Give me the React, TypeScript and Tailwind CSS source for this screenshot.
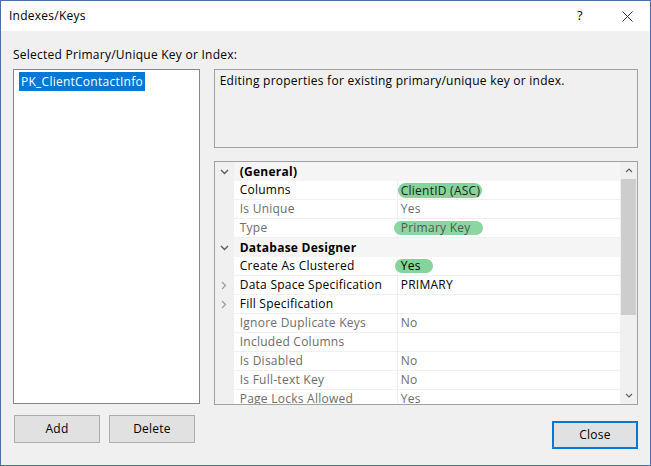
import React from "react";

type Row =
  | { kind: "cat"; name: string }
  | { kind: "prop"; name: string; value?: string; dim?: boolean; mark?: "clientid" | "pk" | "yes"; expand?: boolean };

const rows: Row[] = [
  { kind: "cat", name: "(General)" },
  { kind: "prop", name: "Columns", value: "ClientID (ASC)", mark: "clientid" },
  { kind: "prop", name: "Is Unique", value: "Yes", dim: true },
  { kind: "prop", name: "Type", value: "Primary Key", dim: true, mark: "pk" },
  { kind: "cat", name: "Database Designer" },
  { kind: "prop", name: "Create As Clustered", value: "Yes", mark: "yes" },
  { kind: "prop", name: "Data Space Specification", value: "PRIMARY", expand: true },
  { kind: "prop", name: "Fill Specification", value: "", expand: true },
  { kind: "prop", name: "Ignore Duplicate Keys", value: "No", dim: true },
  { kind: "prop", name: "Included Columns", value: "", dim: true },
  { kind: "prop", name: "Is Disabled", value: "No", dim: true },
  { kind: "prop", name: "Is Full-text Key", value: "No", dim: true },
  { kind: "prop", name: "Page Locks Allowed", value: "Yes", dim: true },
];

function ChevronDown() {
  return (
    <svg width="9" height="6" viewBox="0 0 9 6" fill="none">
      <path d="M1 1l3.5 3.5L8 1" stroke="#5a5a5a" strokeWidth="1.4" />
    </svg>
  );
}

function ChevronRight() {
  return (
    <svg width="6" height="9" viewBox="0 0 6 9" fill="none">
      <path d="M1 1l3.5 3.5L1 8" stroke="#9a9a9a" strokeWidth="1.2" />
    </svg>
  );
}

function Value({ row }: { row: Extract<Row, { kind: "prop" }> }) {
  const color = row.dim ? "text-[#6d6d6d]" : "text-black";
  if (row.mark === "clientid") {
    return (
      <span className="inline-block -ml-[3px] rounded-full bg-[#86d39c] pl-[3px] pr-[2px] leading-[15px] text-[#1e1e1e]">
        {row.value}
      </span>
    );
  }
  if (row.mark === "pk") {
    return (
      <span className="inline-block -ml-[7px] rounded-full bg-[#8ad7a2] pl-[7px] pr-[12px] leading-[14px] text-[#555]">
        {row.value}
      </span>
    );
  }
  if (row.mark === "yes") {
    return (
      <span className="inline-block -ml-[6px] rounded-full bg-[#86d39c] pl-[6px] pr-[12px] leading-[14px] text-black">
        {row.value}
      </span>
    );
  }
  return <span className={color}>{row.value}</span>;
}

function PropertyGrid() {
  return (
    <div className="flex h-[244px] border border-[#a0a0a0] bg-white">
      <div className="flex-1 overflow-hidden">
        {rows.map((row, i) =>
          row.kind === "cat" ? (
            <div key={i} className="grid h-[19px] grid-cols-[19px_1fr] bg-[#f5f5f5]">
              <div className="flex items-center justify-center bg-[#f0f0f0] pl-[1px]">
                <ChevronDown />
              </div>
              <div className="flex items-center pl-[6px] font-bold text-black">{row.name}</div>
            </div>
          ) : (
            <div key={i} className="grid h-[19px] grid-cols-[19px_163px_1fr]">
              <div className="flex items-center justify-center bg-[#f0f0f0]">
                {row.expand && <ChevronRight />}
              </div>
              <div
                className={`flex items-center border-b border-[#f0f0f0] pl-[6px] ${
                  row.dim ? "text-[#6d6d6d]" : "text-black"
                }`}
              >
                {row.name}
              </div>
              <div className="flex items-center border-b border-l border-[#f0f0f0] pl-[3px]">
                <Value row={row} />
              </div>
            </div>
          )
        )}
      </div>
      <div className="flex w-[17px] flex-col bg-[#f0f0f0]">
        <div className="flex h-[17px] items-center justify-center">
          <svg width="8" height="5" viewBox="0 0 8 5" fill="none">
            <path d="M1 4l3-3 3 3" stroke="#606060" strokeWidth="1.2" />
          </svg>
        </div>
        <div className="flex-1 px-[1px]">
          <div className="h-[136px] bg-[#cdcdcd]" />
        </div>
        <div className="flex h-[17px] items-center justify-center">
          <svg width="8" height="5" viewBox="0 0 8 5" fill="none">
            <path d="M1 1l3 3 3-3" stroke="#606060" strokeWidth="1.2" />
          </svg>
        </div>
      </div>
    </div>
  );
}

export default function App() {
  return (
    <div
      className="flex h-[466px] w-[651px] flex-col border border-[#4a6ea9] text-[12px] tracking-[0.25px] text-black"
      style={{ fontFamily: '"Open Sans", "Noto Sans", sans-serif' }}
    >
      <div className="flex h-[30px] items-center bg-white pl-[8px]">
        <span className="flex-1">Indexes/Keys</span>
        <span className="mr-[14px] w-[20px] text-center text-[13px]">?</span>
        <div className="flex w-[46px] items-center justify-center">
          <svg width="11" height="11" viewBox="0 0 11 11">
            <path d="M0.5 0.5l10 10M10.5 0.5l-10 10" stroke="#333" strokeWidth="1" />
          </svg>
        </div>
      </div>

      <div className="flex flex-1 flex-col bg-[#f0f0f0] px-[12px]">
        <div className="pt-[16px] leading-[16px]">Selected Primary/Unique Key or Index:</div>

        <div className="mt-[6px] flex gap-[14px]">
          <div className="h-[335px] w-[187px] border border-[#828790] bg-white p-[2px] pl-[5px]">
            <span className="inline-block bg-[#0078d7] px-[2px] leading-[19px] text-white">
              PK_ClientContactInfo
            </span>
          </div>

          <div className="flex w-[425px] flex-col gap-[13px]">
            <div className="h-[79px] border border-[#a0a0a0] bg-[#f0f0f0] px-[5px] pt-[2px] leading-[18px]">
              Editing properties for existing primary/unique key or index.
            </div>
            <PropertyGrid />
          </div>
        </div>

        <div className="mt-[10px] flex items-start">
          <div className="flex gap-[9px] pl-[1px]">
            <button className="h-[28px] w-[86px] border border-[#adadad] bg-[#e1e1e1]">Add</button>
            <button className="h-[28px] w-[86px] border border-[#adadad] bg-[#e1e1e1]">Delete</button>
          </div>
          <div className="flex-1" />
          <button className="mt-[6px] h-[28px] w-[86px] border-2 border-[#0078d7] bg-[#e1e1e1]">Close</button>
        </div>
      </div>
    </div>
  );
}
